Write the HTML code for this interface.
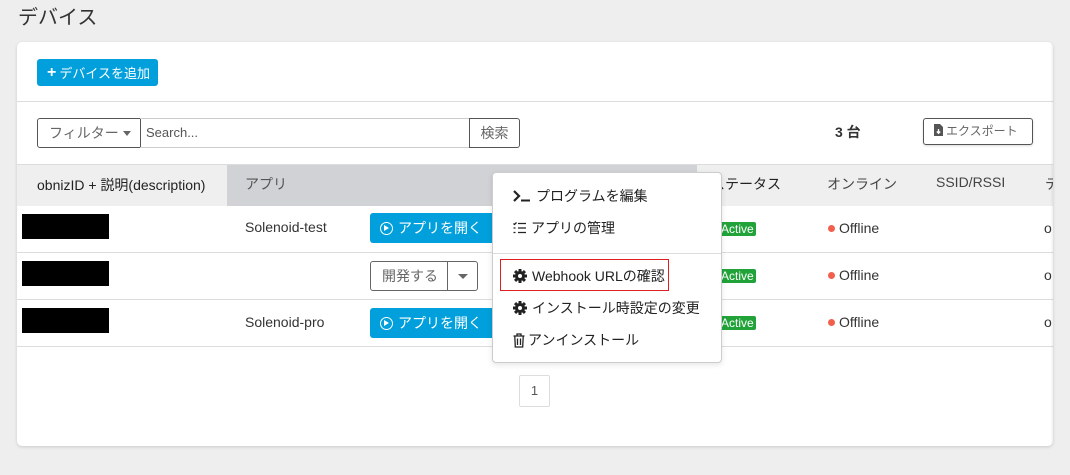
<!DOCTYPE html>
<html><head><meta charset="utf-8"><style>
*{box-sizing:border-box;margin:0;padding:0}
body{width:1070px;height:475px;background:#eeeeee;font-family:"Liberation Sans","Noto Sans CJK JP",sans-serif;color:#333;position:relative;overflow:hidden;font-size:14px}
.a{position:absolute}
.title{left:18px;top:1px;font-size:20px;color:#333}
.card{left:17px;top:42px;width:1036px;height:404px;background:#fff;border-radius:5px;box-shadow:0 1px 3px rgba(0,0,0,.15);overflow:hidden}
.btnb{background:#019fdb;color:#fff;border-radius:3px;font-size:13px;display:flex;align-items:center}
.line{background:#dcdcdc;height:1px}
.red{background:#000}
.act{background:#22a33a;color:#fff;font-size:12px;padding:0 2px;height:14px;line-height:14px;border-radius:2px}
.dot{width:7px;height:7px;border-radius:50%;background:#f0604d}
.menu{left:492px;top:172px;width:230px;height:191px;background:#fff;border:1px solid #ccc;border-radius:4px;box-shadow:0 2px 6px rgba(0,0,0,.1)}
.mi{position:absolute;left:20px;font-size:14px;color:#222;display:flex;align-items:center;gap:5px}
</style></head><body>
<div class="a title">デバイス</div>
<div class="a card">
 <div class="a btnb" style="left:20px;top:17px;width:121px;height:27px;padding-left:10px"><b style="font-size:16px;margin-right:3px">+</b>デバイスを追加</div>
 <div class="a line" style="left:0;top:59px;width:1036px"></div>
 <div class="a" style="left:20px;top:76px;width:104px;height:30px;border:1px solid #555;border-radius:3px 0 0 3px;color:#666;font-size:14px;line-height:28px;padding-left:11px">フィルター<span style="display:inline-block;margin-left:4px;vertical-align:2px;border-top:5px solid #666;border-left:4px solid transparent;border-right:4px solid transparent"></span></div>
 <div class="a" style="left:123px;top:76px;width:330px;height:30px;border:1px solid #ccc;border-left:none;color:#555;font-size:13px;line-height:28px;padding-left:6px">Search...</div>
 <div class="a" style="left:452px;top:76px;width:51px;height:30px;border:1px solid #555;border-radius:0 3px 3px 0;color:#666;line-height:28px;text-align:center">検索</div>
 <div class="a" style="left:818px;top:80px;font-weight:bold;font-size:14px">3 台</div>
 <div class="a" style="left:906px;top:76px;width:110px;height:27px;border:1px solid #555;border-radius:3px;color:#666;font-size:12px;line-height:25px;padding-left:10px;box-shadow:0 1px 2px rgba(0,0,0,.15)"><svg width="9" height="12" viewBox="0 0 9 12" style="vertical-align:-1px;margin-right:3px"><path d="M0 0H6L9 3V12H0Z" fill="#555"/><path d="M4.5 5V9M2.8 7.5L4.5 9.3L6.2 7.5" stroke="#fff" stroke-width="1.3" fill="none"/></svg>エクスポート</div>
 <div class="a line" style="left:0;top:122px;width:1036px"></div>
 <div class="a" style="left:0;top:123px;width:1036px;height:41px;background:#efefef"></div>
 <div class="a" style="left:210px;top:123px;width:470px;height:41px;background:#d1d2d6"></div>
 <div class="a" style="left:20px;top:133px;font-size:14px;color:#222">obnizID + 説明(description)</div>
 <div class="a" style="left:228px;top:132px;color:#555">アプリ</div>
 <div class="a" style="left:694px;top:132px;color:#222">ステータス</div>
 <div class="a" style="left:810px;top:132px;color:#444">オンライン</div>
 <div class="a" style="left:919px;top:132px;color:#444">SSID/RSSI</div>
 <div class="a" style="left:1028px;top:132px;color:#444">テ</div>
 <div class="a line" style="left:0;top:210px;width:1036px"></div>
 <div class="a line" style="left:0;top:257px;width:1036px"></div>
 <div class="a line" style="left:0;top:304px;width:1036px"></div>
 <div class="a red" style="left:5px;top:172px;width:87px;height:25px"></div>
 <div class="a red" style="left:5px;top:219px;width:87px;height:25px"></div>
 <div class="a red" style="left:5px;top:266px;width:87px;height:25px"></div>
 <div class="a" style="left:228px;top:177px;color:#333">Solenoid-test</div>
 <div class="a" style="left:228px;top:272px;color:#333">Solenoid-pro</div>
 <div class="a btnb" style="left:353px;top:171px;width:125px;height:30px;padding-left:10px;font-size:14px"><span style="display:inline-block;width:13px;height:13px;border:1.5px solid #fff;border-radius:50%;margin-right:5px;position:relative"><span style="position:absolute;left:3px;top:2px;border-left:5px solid #fff;border-top:3px solid transparent;border-bottom:3px solid transparent"></span></span>アプリを開く</div>
 <div class="a btnb" style="left:353px;top:266px;width:125px;height:30px;padding-left:10px;font-size:14px"><span style="display:inline-block;width:13px;height:13px;border:1.5px solid #fff;border-radius:50%;margin-right:5px;position:relative"><span style="position:absolute;left:3px;top:2px;border-left:5px solid #fff;border-top:3px solid transparent;border-bottom:3px solid transparent"></span></span>アプリを開く</div>
 <div class="a" style="left:353px;top:219px;width:108px;height:30px;border:1px solid #666;border-radius:3px;color:#666;line-height:28px;padding-left:11px">開発する</div>
 <div class="a" style="left:430px;top:219px;width:1px;height:30px;background:#666"></div>
 <div class="a" style="left:441px;top:232px;border-top:5px solid #666;border-left:5px solid transparent;border-right:5px solid transparent"></div>
 <div class="a act" style="left:702px;top:180px">Active</div>
 <div class="a act" style="left:702px;top:227px">Active</div>
 <div class="a act" style="left:702px;top:274px">Active</div>
 <div class="a dot" style="left:811px;top:183px"></div><div class="a" style="left:822px;top:178px">Offline</div>
 <div class="a dot" style="left:811px;top:230px"></div><div class="a" style="left:822px;top:225px">Offline</div>
 <div class="a dot" style="left:811px;top:277px"></div><div class="a" style="left:822px;top:272px">Offline</div>
 <div class="a" style="left:1027px;top:178px">o</div>
 <div class="a" style="left:1027px;top:225px">o</div>
 <div class="a" style="left:1027px;top:272px">o</div>
 <div class="a" style="left:502px;top:333px;width:31px;height:32px;border:1px solid #ddd;border-radius:2px;text-align:center;line-height:30px;font-size:13px;color:#555">1</div>
 <div class="a" style="left:1033px;top:0;width:3px;height:404px;background:linear-gradient(90deg,rgba(0,0,0,0),rgba(0,0,0,.06))"></div>
</div>
<div class="a menu">
 <div class="mi" style="top:13px"><svg width="18" height="12" viewBox="0 0 18 12"><path d="M1 1L6 6L1 11" stroke="#222" stroke-width="2.2" fill="none"/><path d="M8 10.5H17" stroke="#222" stroke-width="2"/></svg>プログラムを編集</div>
 <div class="mi" style="top:45px"><svg width="13" height="12" viewBox="0 0 13 12"><path d="M5 1.5H13M5 6H13M5 10.5H13M0.5 1.5L1.5 2.5L3.5 0.5M0.5 6H2.5M0.5 10.5H2.5" stroke="#222" stroke-width="1.3" fill="none"/></svg>アプリの管理</div>
 <div class="a line" style="left:0;top:80px;width:228px"></div>
 <div class="a" style="left:7px;top:86px;width:169px;height:32px;border:1px solid #e02020"></div>
 <div class="mi" style="top:93px"><svg width="14" height="14" viewBox="0 0 14 14"><g fill="#222"><circle cx="7" cy="7" r="5"/><rect x="5.5" y="0" width="3" height="14"/><rect x="0" y="5.5" width="14" height="3"/><rect x="5.5" y="0" width="3" height="14" transform="rotate(45 7 7)"/><rect x="5.5" y="0" width="3" height="14" transform="rotate(-45 7 7)"/></g><circle cx="7" cy="7" r="2" fill="#fff"/></svg>Webhook URLの確認</div>
 <div class="mi" style="top:125px"><svg width="14" height="14" viewBox="0 0 14 14"><g fill="#222"><circle cx="7" cy="7" r="5"/><rect x="5.5" y="0" width="3" height="14"/><rect x="0" y="5.5" width="14" height="3"/><rect x="5.5" y="0" width="3" height="14" transform="rotate(45 7 7)"/><rect x="5.5" y="0" width="3" height="14" transform="rotate(-45 7 7)"/></g><circle cx="7" cy="7" r="2" fill="#fff"/></svg>インストール時設定の変更</div>
 <div class="mi" style="top:157px;gap:3px"><svg width="12" height="15" viewBox="0 0 12 15"><path d="M0.5 3H11.5M4 3V1H8V3M1.8 3.5L2.3 14H9.7L10.2 3.5M4.5 5.5V12M7.5 5.5V12" stroke="#222" stroke-width="1.3" fill="none"/></svg>アンインストール</div>
</div>
</body></html>
